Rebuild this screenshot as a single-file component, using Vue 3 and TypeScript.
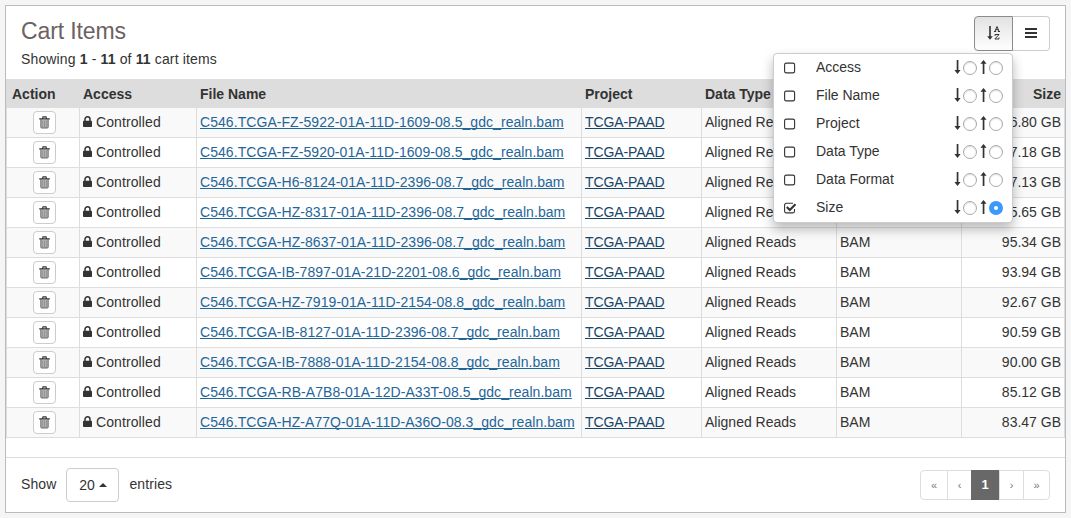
<script setup lang="ts">
import { ref } from 'vue'

interface CartFile {
  name: string
  size: string
}

interface SortField {
  label: string
  active: boolean
  order: 'asc' | 'desc' | ''
}

const files = ref<CartFile[]>([
  { name: 'C546.TCGA-FZ-5922-01A-11D-1609-08.5_gdc_realn.bam', size: '196.80 GB' },
  { name: 'C546.TCGA-FZ-5920-01A-11D-1609-08.5_gdc_realn.bam', size: '187.18 GB' },
  { name: 'C546.TCGA-H6-8124-01A-11D-2396-08.7_gdc_realn.bam', size: '107.13 GB' },
  { name: 'C546.TCGA-HZ-8317-01A-11D-2396-08.7_gdc_realn.bam', size: '95.65 GB' },
  { name: 'C546.TCGA-HZ-8637-01A-11D-2396-08.7_gdc_realn.bam', size: '95.34 GB' },
  { name: 'C546.TCGA-IB-7897-01A-21D-2201-08.6_gdc_realn.bam', size: '93.94 GB' },
  { name: 'C546.TCGA-HZ-7919-01A-11D-2154-08.8_gdc_realn.bam', size: '92.67 GB' },
  { name: 'C546.TCGA-IB-8127-01A-11D-2396-08.7_gdc_realn.bam', size: '90.59 GB' },
  { name: 'C546.TCGA-IB-7888-01A-11D-2154-08.8_gdc_realn.bam', size: '90.00 GB' },
  { name: 'C546.TCGA-RB-A7B8-01A-12D-A33T-08.5_gdc_realn.bam', size: '85.12 GB' },
  { name: 'C546.TCGA-HZ-A77Q-01A-11D-A36O-08.3_gdc_realn.bam', size: '83.47 GB' },
])

const fields = ref<SortField[]>([
  { label: 'Access', active: false, order: '' },
  { label: 'File Name', active: false, order: '' },
  { label: 'Project', active: false, order: '' },
  { label: 'Data Type', active: false, order: '' },
  { label: 'Data Format', active: false, order: '' },
  { label: 'Size', active: true, order: 'asc' },
])

function remove(index: number) {
  files.value.splice(index, 1)
}
</script>

<template>
  <main class="page">
    <section class="panel">
      <header class="heading">
        <div>
          <h1>Cart Items</h1>
          <p>Showing <b>1</b> - <b>11</b> of <b>11</b> cart items</p>
        </div>
        <div class="tools">
          <button class="tool pressed" aria-label="Sort">
            <svg width="14" height="16" viewBox="0 0 14 16">
              <path d="M2.200 1h1.600v10.300h2L3 14.700.2 11.300h2z" fill="#333" />
              <path d="M7 6.500h2.100M10.900 6.500H13M8 6.300 10 1.500l2 4.800M8.800 4.700h2.400" fill="none" stroke="#333" stroke-width="1" />
              <path d="M8 10.900V9.500h4L7.900 14H12v-1.500" fill="none" stroke="#333" stroke-width="1" />
            </svg>
          </button>
          <button class="tool" aria-label="Columns">
            <svg width="12" height="11" viewBox="0 0 12 11">
              <path d="M0 0h12v2H0zM0 4h12v2H0zM0 8h12v2H0z" fill="#333" />
            </svg>
          </button>
          <ul class="menu">
            <li v-for="field in fields" :key="field.label">
              <svg class="check" width="13" height="12" viewBox="0 0 13 12">
                <path
                  v-if="field.active"
                  d="M10.500 7v2.300a1.600 1.600 0 0 1-1.600 1.600H2.200A1.600 1.600 0 0 1 .6 9.300V2.900A1.600 1.600 0 0 1 2.200 1.300H9"
                  fill="none" stroke="#333" stroke-width="1.100"
                />
                <rect v-else x=".6" y="1.100" width="10" height="9.800" rx="1.700" fill="none" stroke="#333" stroke-width="1.100" />
                <path v-if="field.active" d="m2.800 4.900 3 3 5.700-5.700" fill="none" stroke="#333" stroke-width="2.100" />
              </svg>
              <span class="label">{{ field.label }}</span>
              <svg class="arrow" width="7" height="14" viewBox="0 0 7 14">
                <path d="M2.700 0h1.700v10.100h2.200L3.500 13.900.4 10.100h2.300z" fill="#333" />
              </svg>
              <span class="radio" :class="{ on: field.order === 'desc' }"></span>
              <svg class="arrow up" width="7" height="14" viewBox="0 0 7 14">
                <path d="M2.700 13.900h1.700V3.800h2.200L3.500 0 .4 3.800h2.300z" fill="#333" />
              </svg>
              <span class="radio" :class="{ on: field.order === 'asc' }"></span>
            </li>
          </ul>
        </div>
      </header>

      <table>
        <colgroup>
          <col class="c-action"><col class="c-access"><col class="c-file"><col class="c-project"><col class="c-type"><col class="c-format"><col>
        </colgroup>
        <thead>
          <tr>
            <th class="first">Action</th><th>Access</th><th>File Name</th><th>Project</th><th>Data Type</th><th>Data Format</th><th class="size">Size</th>
          </tr>
        </thead>
        <tbody>
          <tr v-for="(file, i) in files" :key="file.name">
            <td class="action">
              <button class="trash" aria-label="Remove" @click="remove(i)">
                <svg width="11" height="13" viewBox="0 0 11 13">
                  <path d="M2 3.500h7v7.800q0 .7-.8.700H2.800q-.8 0-.8-.7z" fill="#b5b5b5" />
                  <path d="M3.700 4.500V11M5.500 4.500V11M7.300 4.500V11" stroke="#8a8a8a" stroke-width=".8" />
                  <path d="M1.800 3.300v7.900q0 .8.900.8h5.600q.9 0 .9-.8V3.300" fill="none" stroke="#5a5a5a" stroke-width=".9" />
                  <path d="M.2 2.900h10.600M3.500 2.700l.5-1.800h3l.5 1.800" fill="none" stroke="#333" stroke-width="1.100" />
                </svg>
              </button>
            </td>
            <td>
              <svg class="lock" width="9" height="11" viewBox="0 0 9 11">
                <rect y="4.700" width="9" height="6.300" rx=".8" fill="#333" />
                <path d="M2 5V3.300a2.500 2.500 0 0 1 5 0V5" fill="none" stroke="#333" stroke-width="1.500" />
              </svg><span class="access">Controlled</span>
            </td>
            <td><a class="file">{{ file.name }}</a></td>
            <td><a class="project">TCGA-PAAD</a></td>
            <td>Aligned Reads</td>
            <td>BAM</td>
            <td class="size">{{ file.size }}</td>
          </tr>
        </tbody>
      </table>

      <footer>
        <span>Show</span>
        <button class="count">20 <i></i></button>
        <span>entries</span>
        <nav>
          <a class="w27">«</a><a class="w24">‹</a><a class="current">1</a><a class="w24">›</a><a class="w27">»</a>
        </nav>
      </footer>
    </section>
  </main>
</template>

<style>
html,
body {
  background: #f5f5f5;
}
</style>

<style scoped>
* {
  box-sizing: border-box;
}
.page {
  height: 518px;
  padding: 5px;
  overflow: hidden;
  font: 14px/20px "Liberation Sans", Arial, sans-serif;
  color: #333;
}
.panel {
  width: 1061px;
  height: 508px;
  background: #fff;
  border: 1px solid #bbb;
}
.heading {
  height: 73px;
  padding: 10px 15px 0;
  display: flex;
  justify-content: space-between;
}
h1 {
  margin: 2px 0 0;
  font-size: 23px;
  line-height: 26px;
  font-weight: 400;
  letter-spacing: -0.12px;
  color: #6b6262;
}
p {
  margin: 5px 0 0;
  letter-spacing: 0.14px;
}
button {
  font: inherit;
  color: inherit;
  background: #fff;
  border: 1px solid #ccc;
  padding: 0;
}
.tools {
  position: relative;
  display: flex;
  height: 35px;
}
.tool {
  width: 37px;
  display: flex;
  align-items: center;
  justify-content: center;
  border-left: 0;
  border-radius: 0 4px 4px 0;
}
.tool.pressed {
  width: 39px;
  padding-bottom: 2px;
  border: 1px solid #8c8c8c;
  border-radius: 4px 0 0 4px;
  background: linear-gradient(#e2e2e2, #fff);
}
.menu {
  position: absolute;
  right: 37px;
  top: 37px;
  width: 240px;
  height: 170px;
  margin: 0;
  padding: 0 9px 0 10px;
  list-style: none;
  background: #fff;
  border: 1px solid #ccc;
  border-radius: 4px;
  box-shadow: 0 6px 12px rgba(0, 0, 0, 0.28);
}
.menu li {
  display: flex;
  align-items: center;
  height: 28px;
  padding-bottom: 2px;
}
.check {
  margin-top: 2px;
}
.label {
  flex: 1;
  margin-left: 19px;
  line-height: 26px;
}
.arrow {
  margin-right: 2px;
}
.arrow.up {
  margin-left: 3px;
}
.radio {
  width: 14px;
  height: 14px;
  margin-top: 2px;
  border: 1px solid #aaa;
  border-radius: 50%;
  box-shadow: inset 0 1px 1px #ddd;
}
.radio.on {
  border: 5px solid #3b99fc;
  background: #fff;
  box-shadow: none;
}
table {
  width: 1059px;
  table-layout: fixed;
  border-collapse: separate;
  border-spacing: 0;
}
.c-action { width: 74px; }
.c-access { width: 117px; }
.c-file { width: 385px; }
.c-project { width: 120px; }
.c-type { width: 135px; }
.c-format { width: 125px; }
th {
  height: 29px;
  padding: 1px 4px 0 3px;
  text-align: left;
  background: #ddd;
  white-space: nowrap;
}
th.first {
  padding-left: 6px;
}
td {
  height: 30px;
  padding: 0 3px 2px;
  border-right: 1px solid #ddd;
  border-bottom: 1px solid #ddd;
  white-space: nowrap;
}
td.action {
  border-left: 1px solid #ddd;
  padding: 0 0 0 2px;
}
tbody tr:nth-child(odd) {
  background: #f9f9f9;
}
.size {
  text-align: right;
}
.trash {
  width: 23px;
  height: 23px;
  margin: 0 auto;
  display: flex;
  align-items: center;
  justify-content: center;
  border-radius: 4px;
}
.lock {
  margin-right: 4px;
}
.access {
  letter-spacing: 0.1px;
}
a {
  text-decoration-skip-ink: none;
}
a.file {
  color: #1f6699;
  letter-spacing: 0.06px;
  text-decoration: underline;
}
a.project {
  color: #164568;
  letter-spacing: -0.12px;
  text-decoration: underline;
}
footer {
  height: 56px;
  margin-top: 19px;
  padding: 0 15px 2px;
  border-top: 1px solid #ddd;
  display: flex;
  align-items: center;
}
footer > span {
  letter-spacing: 0.1px;
  position: relative;
  top: -1px;
}
.count {
  width: 53px;
  height: 34px;
  margin: 0 10px;
  display: flex;
  align-items: center;
  justify-content: center;
  gap: 4px;
  border-radius: 4px;
}
.count i {
  border: 4px solid transparent;
  border-top: 0;
  border-bottom-color: #333;
}
nav {
  display: flex;
  margin-left: auto;
  height: 30px;
  border: 1px solid #ddd;
  border-radius: 4px;
}
nav a {
  font-size: 11px;
  line-height: 28px;
  text-align: center;
  color: #777;
}
.w27 { width: 26px; }
.w24 { width: 24px; }
nav a + a {
  border-left: 1px solid #ddd;
}
nav a.current {
  width: 28px;
  height: 30px;
  margin: -1px 0;
  line-height: 30px;
  background: #686868;
  color: #fff;
  font-weight: 700;
  font-size: 13px;
  border: 0;
}
</style>
